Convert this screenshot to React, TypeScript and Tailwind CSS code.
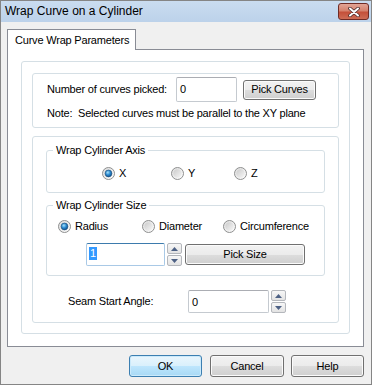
import { useId } from "react";

const btn =
  "flex items-center justify-center rounded-[3px] border border-[#707070] bg-[linear-gradient(#f2f2f2_0%,#ebebeb_50%,#dddddd_50%,#cfcfcf_100%)] shadow-[inset_0_0_0_1px_#fbfbfb] text-[11px] text-black";

const groupBox = "rounded-[3px] border border-[#d5dfe5]";

function Radio({ label, checked = false }: { label: string; checked?: boolean }) {
  const id = useId().replace(/:/g, "");
  return (
    <span className="flex items-center gap-[4px]">
      <svg width="13" height="13" viewBox="0 0 13 13">
        <defs>
          <linearGradient id={`ring${id}`} x1="0" y1="0" x2="1" y2="1">
            <stop offset="0" stopColor="#dcdcdc" />
            <stop offset="1" stopColor="#ffffff" />
          </linearGradient>
          <linearGradient id={`fill${id}`} x1="0" y1="0" x2="1" y2="1">
            <stop offset="0" stopColor="#cbcbcb" />
            <stop offset="1" stopColor="#f6f6f6" />
          </linearGradient>
          <radialGradient id={`dot${id}`} cx="0.4" cy="0.35" r="0.7">
            <stop offset="0" stopColor="#a6e1fb" />
            <stop offset="0.5" stopColor="#2b8ad0" />
            <stop offset="1" stopColor="#0b4a86" />
          </radialGradient>
        </defs>
        <circle cx="6.5" cy="6.5" r="6" fill={`url(#ring${id})`} stroke="#8e8f8f" />
        <circle cx="6.5" cy="6.5" r="4.2" fill={`url(#fill${id})`} />
        {checked ? <circle cx="6.5" cy="6.5" r="3.4" fill={`url(#dot${id})`} stroke="#1d4f7c" strokeWidth="0.6" /> : null}
      </svg>
      <span>{label}</span>
    </span>
  );
}

function Spinner() {
  const half =
    "flex h-[11px] w-[15px] items-center justify-center rounded-[2px] border border-[#b4b7bc] bg-[linear-gradient(#f7f7f7,#e3e3e3)]";
  return (
    <div className="flex flex-col gap-px">
      <div className={half}>
        <svg width="7" height="4" viewBox="0 0 7 4">
          <path d="M0 4 L3.5 0 L7 4 Z" fill="#4d6185" />
        </svg>
      </div>
      <div className={half}>
        <svg width="7" height="4" viewBox="0 0 7 4">
          <path d="M0 0 L3.5 4 L7 0 Z" fill="#4d6185" />
        </svg>
      </div>
    </div>
  );
}

export default function App() {
  return (
    <div className="flex h-[385px] w-[372px] flex-col border border-[#858585] bg-[#f0f0f0] font-['Liberation_Sans',Arial,sans-serif] text-[11px] tracking-[-0.2px] text-black">
      {/* title bar */}
      <div className="flex h-[21px] items-start justify-between bg-[linear-gradient(#cadcf0,#bcd2ea)] pl-[4px] pr-[2px]">
        <span className="mt-[3px] text-[12px] leading-[15px] tracking-normal text-black">Wrap Curve on a Cylinder</span>
        <button className="mt-[2px] flex h-[17px] w-[31px] items-center justify-center rounded-[3px] border border-[#6f2b25] bg-[linear-gradient(#e2a495_0%,#d5826e_45%,#c4503a_55%,#cd6c55_100%)]">
          <svg width="12" height="10" viewBox="0 0 12 10">
            <path d="M2 1.5 L10 8.5 M10 1.5 L2 8.5" stroke="#4a2a2a" strokeWidth="3.6" strokeLinecap="round" />
            <path d="M2 1.5 L10 8.5 M10 1.5 L2 8.5" stroke="#ffffff" strokeWidth="2" strokeLinecap="round" />
          </svg>
        </button>
      </div>

      <div className="flex flex-1 flex-col pl-[6px] pr-[7px] pt-[7px]">
        {/* tab */}
        <div className="relative z-10 -mb-px flex h-[21px] w-[129px] items-center border border-b-0 border-[#898c95] bg-white pl-[7px]">
          Curve Wrap Parameters
        </div>
        <div className="h-[298px] border border-[#898c95] bg-white px-[13px] pt-[11px]">
          <div className={`flex h-[273px] flex-col gap-[8px] px-[10px] pt-[11px] ${groupBox}`}>
            {/* curves picked */}
            <div className={`h-[55px] pl-[14px] pt-[3px] ${groupBox}`}>
              <div className="flex h-[25px] items-center">
                <span className="w-[129px]">Number of curves picked:</span>
                <div className="flex h-[25px] w-[61px] items-start rounded-[2px] border border-[#c5cad0] border-t-[#abadb3] pl-[3px] pt-[3px]">
                  0
                </div>
                <button className={`${btn} ml-[6px] h-[20px] w-[73px]`}>Pick Curves</button>
              </div>
              <div className="mt-[5px] leading-[13px]">Note:&nbsp; Selected curves must be parallel to the XY plane</div>
            </div>

            {/* cylinder */}
            <div className={`h-[187px] pl-[13px] ${groupBox}`}>
              <fieldset className={`mt-[7px] w-[279px] pb-[12px] pt-[9px] ${groupBox}`}>
                <legend className="ml-[6px] px-[3px] leading-[13px]">Wrap Cylinder Axis</legend>
                <div className="flex h-[14px] items-center pl-[55px]">
                  <div className="w-[69px]">
                    <Radio label="X" checked />
                  </div>
                  <div className="w-[63px]">
                    <Radio label="Y" />
                  </div>
                  <Radio label="Z" />
                </div>
              </fieldset>

              <fieldset className={`mt-[6px] w-[279px] pb-[9px] pt-[7px] ${groupBox}`}>
                <legend className="ml-[6px] px-[3px] leading-[13px]">Wrap Cylinder Size</legend>
                <div className="flex h-[14px] items-center pl-[11px]">
                  <div className="w-[84px]">
                    <Radio label="Radius" checked />
                  </div>
                  <div className="w-[81px]">
                    <Radio label="Diameter" />
                  </div>
                  <Radio label="Circumference" />
                </div>
                <div className="mt-[10px] flex items-center pl-[39px]">
                  <div className="flex h-[23px] w-[79px] items-start rounded-[2px] border border-[#a9c9e6] border-t-[#3d7bad] pl-[2px] pt-[3px]">
                    <span className="bg-[#3399ff] px-px leading-[13px] text-white">1</span>
                  </div>
                  <div className="ml-[2px]">
                    <Spinner />
                  </div>
                  <button className={`${btn} ml-[3px] h-[21px] w-[120px]`}>Pick Size</button>
                </div>
              </fieldset>

              <div className="mt-[14px] flex items-center pl-[22px]">
                <span className="w-[120px]">Seam Start Angle:</span>
                <div className="flex h-[23px] w-[81px] items-start rounded-[2px] border border-[#c5cad0] border-t-[#abadb3] pl-[3px] pt-[3px]">
                  0
                </div>
                <div className="ml-[2px]">
                  <Spinner />
                </div>
              </div>
            </div>
          </div>
        </div>

        {/* dialog buttons */}
        <div className="mt-[8px] flex justify-end">
          <button className="flex h-[22px] w-[73px] items-center justify-center rounded-[3px] border border-[#3c7fb1] bg-[linear-gradient(#eaf6fd_0%,#d9f0fc_50%,#bee6fd_50%,#a7d9f5_100%)] shadow-[inset_0_0_0_1px_#cbeafb]">
            OK
          </button>
          <button className={`${btn} ml-[8px] h-[22px] w-[74px]`}>Cancel</button>
          <button className={`${btn} ml-[7px] h-[22px] w-[73px]`}>Help</button>
        </div>
      </div>
    </div>
  );
}
